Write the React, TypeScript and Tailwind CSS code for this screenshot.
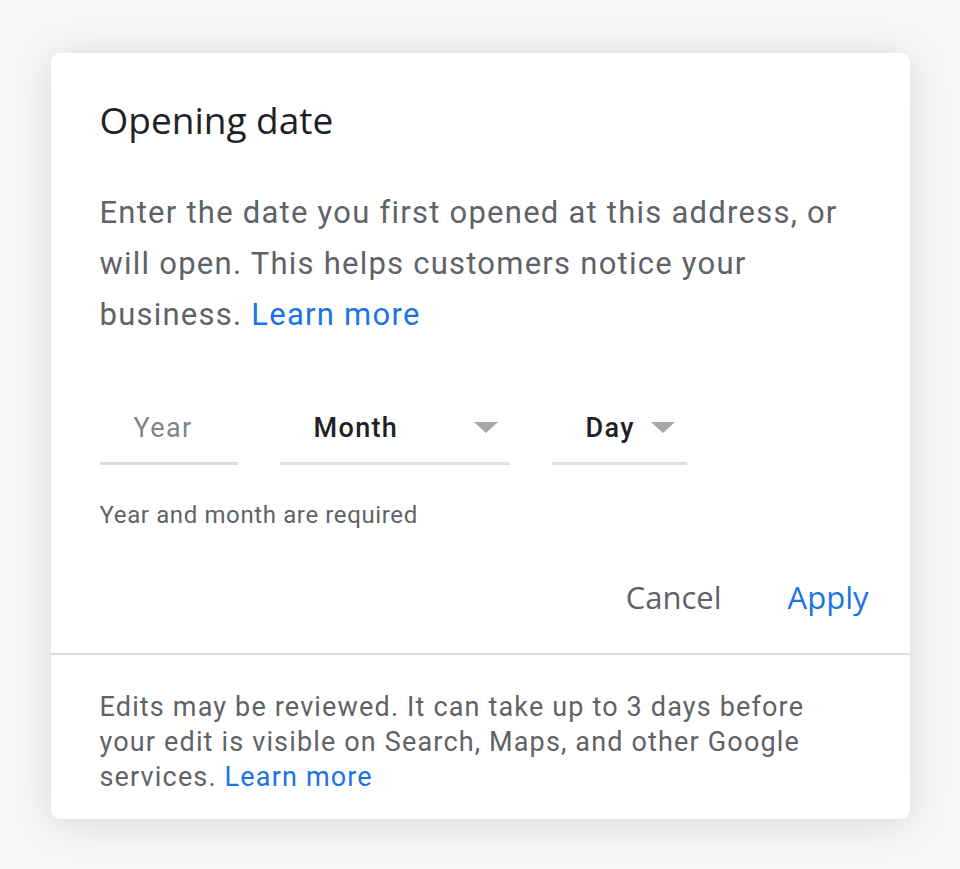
function Caret() {
  return (
    <svg width="24" height="12" viewBox="0 0 24 12" className="shrink-0">
      <path d="M0 0 L24 0 L12 11 Z" fill="#a7a7a7" />
    </svg>
  );
}

export default function App() {
  return (
    <div className="min-h-[869px] w-full bg-[#f7f7f7] pt-[53px] font-['Roboto',sans-serif]">
      <div className="mx-auto w-[859px] overflow-hidden rounded-[9px] bg-white shadow-[0_4px_40px_rgba(0,0,0,0.13)]">
        <div className="px-[49px] pt-[45px] pb-[36px]">
          <h1 className="font-['Open_Sans',sans-serif] text-[37px] leading-[44px] text-[#202124]">
            Opening date
          </h1>

          <p className="mt-[45px] text-[31px] leading-[51px] tracking-[0.04em] text-[#5f6368]">
            Enter the date you first opened at this address, or will open. This helps customers notice your
            business. <a className="text-[#1a73e8]">Learn more</a>
          </p>

          {/* date fields */}
          <div className="mt-[65px] flex items-start gap-[42px]">
            <div className="w-[138px]">
              <div className="h-[46px] pl-[34px] text-[27px] leading-[46px] tracking-[0.05em] text-[#80868b]">Year</div>
              <div className="mt-[11px] h-[3px] bg-[#dadce0]" />
            </div>
            <div className="w-[230px]">
              <div className="flex h-[46px] items-center justify-between pl-[34px] pr-[12px]">
                <span className="text-[27px] font-medium tracking-[0.05em] text-[#202124]">Month</span>
                <Caret />
              </div>
              <div className="mt-[11px] h-[3px] bg-[#e0e0e0]" />
            </div>
            <div className="w-[135px]">
              <div className="flex h-[46px] items-center gap-[16px] pl-[34px]">
                <span className="text-[27px] font-medium tracking-[0.05em] text-[#202124]">Day</span>
                <Caret />
              </div>
              <div className="mt-[11px] h-[3px] bg-[#e0e0e0]" />
            </div>
          </div>

          <div className="mt-[35px] text-[24px] leading-[30px] tracking-[0.026em] text-[#5f6368]">
            Year and month are required
          </div>

          <div className="mt-[47px] mr-[-8px] flex justify-end gap-[66px] font-['Open_Sans',sans-serif] text-[31px] leading-[40px]">
            <button className="text-[#5f6368]">Cancel</button>
            <button className="text-[#1a73e8]">Apply</button>
          </div>
        </div>

        <div className="h-[2px] bg-[#dadce0]" />

        <div className="px-[49px] pt-[35px] pb-[24px] text-[27px] leading-[35px] tracking-[0.043em] text-[#5f6368]">
          Edits may be reviewed. It can take up to 3 days before your edit is visible on Search, Maps, and other Google
          services. <a className="text-[#1a73e8]">Learn more</a>
        </div>
      </div>
    </div>
  );
}
